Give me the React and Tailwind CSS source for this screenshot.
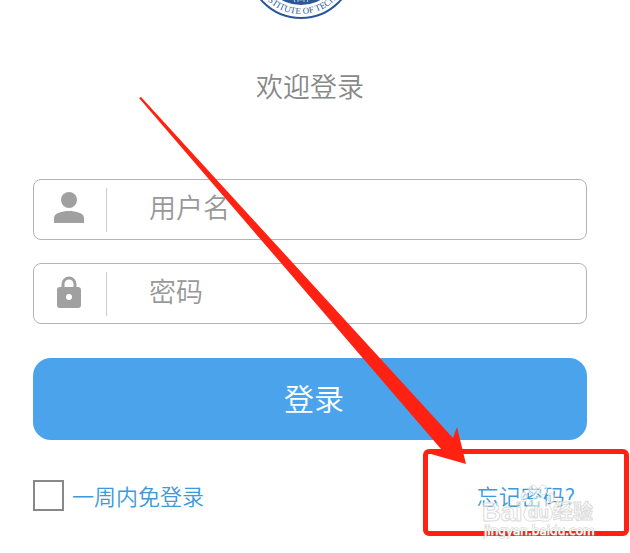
const FONT = 'font-["Noto_Sans_CJK_SC",sans-serif]';

function Seal() {
  return (
    <svg width="120" height="20" viewBox="0 0 120 20" className="ml-60" aria-hidden="true">
      <circle cx="61" cy="-35" r="53" fill="#fff" stroke="#2b5797" strokeWidth="2" />
      <circle cx="61" cy="-35" r="40" fill="#2b5797" />
      <path d="M43 -6 Q61 6 79 -6 M53 -2 L55 2 M58 -2 V2 M64 -2 V2 M69 -2 L67 2" fill="none" stroke="#c5d3e6" />
      <path id="seal-arc" d="M12 -35 A49 49 0 0 0 110 -35" fill="none" />
      <text fill="#2b5797" className='font-["Liberation_Serif",serif] text-[9px]'>
        <textPath href="#seal-arc" startOffset="60%" textAnchor="middle">INSTITUTE OF TECHNOLOGY</textPath>
      </text>
    </svg>
  );
}

function UserIcon() {
  return (
    <svg width="32" height="32" viewBox="0 0 32 32" fill="#a0a0a0" aria-hidden="true">
      <circle cx="15" cy="8" r="8" />
      <path d="M0 31 V26 C0 21 8 19 15 19 S30 21 30 26 V31 Z" />
    </svg>
  );
}

function LockIcon() {
  return (
    <svg width="32" height="32" viewBox="0 0 32 32" fill="#a0a0a0" aria-hidden="true">
      <path d="M9 12 V8 A6 6 0 0 1 21 8 V12" fill="none" stroke="#a0a0a0" strokeWidth="3" />
      <path fillRule="evenodd" d="M6 11 H24 Q27 11 27 14 V29 Q27 32 24 32 H6 Q3 32 3 29 V14 Q3 11 6 11 Z M15 18 A3 3 0 1 0 15 24 A3 3 0 1 0 15 18 Z" />
    </svg>
  );
}

function Field({ id, label, type, icon }) {
  return (
    <div className="flex h-[61px] items-center rounded-lg border border-[#b4b4b4]">
      <label htmlFor={id} aria-label={label} className="flex h-11 w-[73px] shrink-0 items-center justify-center border-r border-[#ccc] pb-1">
        {icon}
      </label>
      <input
        id={id}
        type={type}
        placeholder={label}
        className="h-full w-full min-w-0 bg-transparent pb-1.5 pl-[42px] text-[27px] font-[350] outline-none placeholder:text-[#999]"
      />
    </div>
  );
}

function Watermark() {
  return (
    <svg
      width="120"
      height="58"
      viewBox="0 0 120 58"
      className="pointer-events-none absolute top-[482px] left-[480px]"
      fill="#fff"
      fillOpacity="0.5"
      stroke="#dcdcdc"
      aria-hidden="true"
    >
      <ellipse cx="44" cy="15" rx="3" ry="5" />
      <ellipse cx="53" cy="8" rx="4" ry="5" />
      <ellipse cx="63" cy="8" rx="4" ry="5" />
      <ellipse cx="71" cy="16" rx="3" ry="5" />
      <path d="M58 15 C66 15 66 21 71 26 C75 33 70 41 63 39 Q58 38 53 39 C45 41 41 33 46 26 C51 21 51 15 58 15 Z" />
      <text x="2" y="39" className='font-["Liberation_Sans",sans-serif] text-[26px] font-bold'>Bai</text>
      <text x="48" y="36" className='font-["Liberation_Sans",sans-serif] text-[17px] font-bold'>du</text>
      <text x="73" y="37" className='font-["Noto_Sans_CJK_SC",sans-serif] text-[20px] font-bold'>经验</text>
      <text x="4" y="53" fill="#fff" fillOpacity="1" stroke="#ccc" paintOrder="stroke" className='font-["DejaVu_Sans",sans-serif] text-[12px]'>
        jingyan.baidu.com
      </text>
    </svg>
  );
}

export default function App() {
  return (
    <main className={`relative overflow-hidden bg-white pb-10 ${FONT}`}>
      <Seal />
      <form className="mr-[43px] ml-[33px]" onSubmit={(e) => e.preventDefault()}>
        <h1 className="mt-[46px] text-center text-[27px] leading-10 font-[350] text-[#888]">欢迎登录</h1>
        <div className="mt-[73px] flex flex-col gap-[23px]">
          <Field id="username" label="用户名" type="text" icon={<UserIcon />} />
          <Field id="password" label="密码" type="password" icon={<LockIcon />} />
        </div>
        <button type="submit" className="mt-[34px] h-[82px] w-full rounded-[18px] bg-[#4aa3eb] pb-1 pl-2 text-[30px] font-[350] text-white">
          登录
        </button>
        <div className="mt-[39px] flex items-center justify-between text-[22px] leading-8 font-[350] text-[#3d9ad9]">
          <label className="flex items-center gap-2">
            <input type="checkbox" className="size-[31px] appearance-none border-2 border-[#888] checked:bg-[#4aa3eb]" />
            一周内免登录
          </label>
          <a href="#forgot" className="mr-3">忘记密码?</a>
        </div>
      </form>
      <div className="pointer-events-none absolute top-[449px] left-[423px] h-[87px] w-[206px] rounded-md border-[5px] border-[#ff2213]" />
      <svg width="630" height="553" viewBox="0 0 630 553" className="pointer-events-none absolute top-0 left-0" aria-hidden="true">
        <polygon points="139,98 141,97 453,438 457,427 466,464 424,452 441,449" fill="#ff2213" />
      </svg>
      <Watermark />
    </main>
  );
}
